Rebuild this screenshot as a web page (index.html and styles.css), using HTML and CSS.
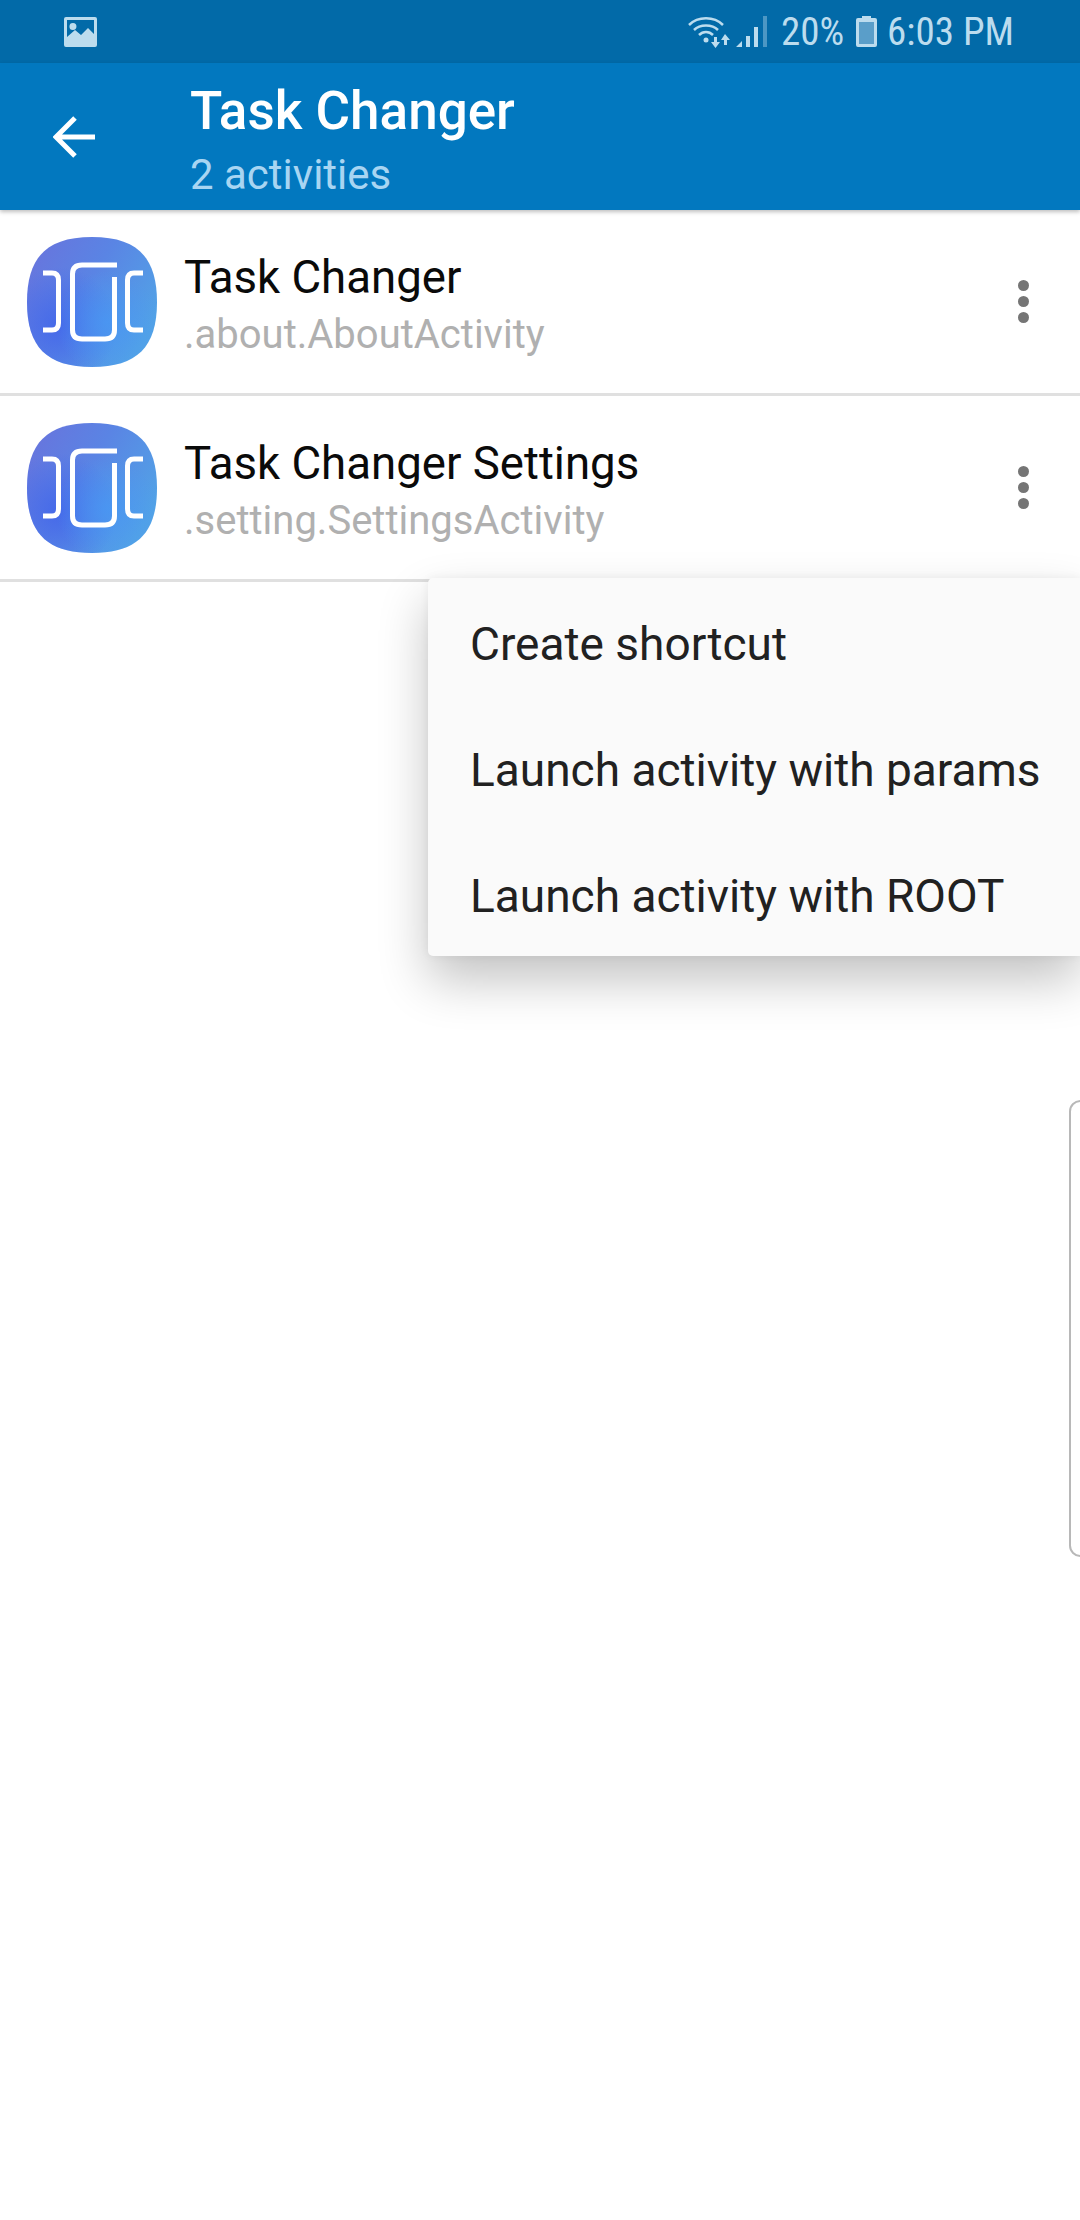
FILE: index.html
```html
<!DOCTYPE html>
<html lang="en">
<head>
    <meta charset="UTF-8">
    <meta name="viewport" content="width=device-width, initial-scale=1.0">
    <title>Task Changer</title>
    <link rel="stylesheet" href="styles.css">
</head>
<body>
    <svg class="defs" width="0" height="0">
        <defs>
            <linearGradient id="iconBase" x1="0" y1="0" x2="1" y2="0.6">
                <stop offset="0" stop-color="#6a72dc"/>
                <stop offset="0.5" stop-color="#5a84e4"/>
                <stop offset="1" stop-color="#52a2e6"/>
            </linearGradient>
            <radialGradient id="iconGlowLeft" cx="0.25" cy="0.68" r="0.45">
                <stop offset="0" stop-color="#4366ea" stop-opacity="0.9"/>
                <stop offset="1" stop-color="#4366ea" stop-opacity="0"/>
            </radialGradient>
            <radialGradient id="iconGlowRight" cx="0.62" cy="0.66" r="0.4">
                <stop offset="0" stop-color="#4898f4" stop-opacity="0.8"/>
                <stop offset="1" stop-color="#4898f4" stop-opacity="0"/>
            </radialGradient>
            <symbol id="appIcon" viewBox="0 0 130 130">
                <path d="M65 0C110 0 130 20 130 65S110 130 65 130S0 110 0 65S20 0 65 0Z" fill="url(#iconBase)"/>
                <path d="M65 0C110 0 130 20 130 65S110 130 65 130S0 110 0 65S20 0 65 0Z" fill="url(#iconGlowLeft)"/>
                <path d="M65 0C110 0 130 20 130 65S110 130 65 130S0 110 0 65S20 0 65 0Z" fill="url(#iconGlowRight)"/>
                <g fill="none" stroke="#fff" stroke-width="5">
                    <path d="M87.500 40V93Q87.500 102 78 102H55Q45.500 102 45.500 93V37Q45.500 28 55 28H90"/>
                    <path d="M16 36H25Q31.500 36 31.500 43V86Q31.500 93 25 93H16"/>
                    <path d="M116 36H107Q100.500 36 100.500 43V86Q100.500 93 107 93H116"/>
                </g>
            </symbol>
        </defs>
    </svg>

    <header class="status-bar">
        <svg class="notif-icon" viewBox="0 0 33 30">
            <path fill="#bcdcee" fill-rule="evenodd" d="M2 0H31Q33 0 33 2V28Q33 30 31 30H2Q0 30 0 28V2Q0 0 2 0ZM3 3V20L11 13L17 18L24 11L30 17V3ZM9 6A3.500 3.500 0 1 1 8.900 13A3.500 3.500 0 0 1 9 6Z"/>
        </svg>
        <div class="status-right">
            <svg class="wifi-icon" viewBox="0 0 42 32">
                <g fill="none" stroke="#bcdcee" stroke-width="2.500">
                    <path d="M1 9C10 0 26 0 35 9"/>
                    <path d="M6 14C12 8 24 8 30 14"/>
                    <path d="M11 19C15 15 21 15 25 19"/>
                </g>
                <circle cx="18" cy="24" r="2.500" fill="#bcdcee"/>
                <path fill="#bcdcee" d="M26 21H29V26H32L27.500 32L23 26H26ZM37 18L42 24H39V29H36V24H33Z"/>
            </svg>
            <svg class="signal-icon" viewBox="0 0 31 31">
                <path fill="#bcdcee" d="M0 31L6 25V31ZM10 20H14V31H10ZM18 11H22V31H18Z"/>
                <path fill="#bcdcee" opacity="0.4" d="M27 0H31V31H27Z"/>
            </svg>
            <span class="status-text">20%</span>
            <svg class="battery-icon" viewBox="0 0 21 31">
                <path fill="#bcdcee" fill-rule="evenodd" d="M6 0H15V2H19Q21 2 21 4V29Q21 31 19 31H2Q0 31 0 29V4Q0 2 2 2H6Z"/>
                <rect x="3" y="6" width="15" height="22" fill="#5a9ec9"/>
            </svg>
            <span class="status-text">6:03 PM</span>
        </div>
    </header>

    <div class="toolbar">
        <svg class="back-icon" viewBox="0 0 42 42">
            <path d="M42 21H3M22 2L3 21L22 40" fill="none" stroke="#fff" stroke-width="5"/>
        </svg>
        <div class="toolbar-text">
            <div class="toolbar-title">Task Changer</div>
            <div class="toolbar-sub">2 activities</div>
        </div>
    </div>

    <div class="list">
        <div class="row">
            <svg class="app-icon"><use href="#appIcon"/></svg>
            <div class="row-text">
                <div class="row-title">Task Changer</div>
                <div class="row-sub">.about.AboutActivity</div>
            </div>
            <div class="more"><i></i><i></i><i></i></div>
        </div>
        <div class="row">
            <svg class="app-icon"><use href="#appIcon"/></svg>
            <div class="row-text">
                <div class="row-title">Task Changer Settings</div>
                <div class="row-sub">.setting.SettingsActivity</div>
            </div>
            <div class="more"><i></i><i></i><i></i></div>
        </div>
    </div>

    <div class="menu">
        <div class="menu-item">Create shortcut</div>
        <div class="menu-item">Launch activity with params</div>
        <div class="menu-item">Launch activity with ROOT</div>
    </div>

    <div class="edge-handle"></div>
</body>
</html>
```

FILE: styles.css
```css
body {
    margin: 0;
    width: 1080px;
    height: 2220px;
    overflow: hidden;
    background-color: #fff;
    font-family: Roboto, sans-serif;
    position: relative;
}
.defs {
    position: absolute;
}
.status-bar {
    height: 63px;
    background-color: #026aa8;
    display: flex;
    align-items: center;
    justify-content: space-between;
    padding: 0 66px 0 64px;
}
.notif-icon {
    width: 33px;
    height: 30px;
}
.status-right {
    display: flex;
    align-items: center;
}
.wifi-icon {
    width: 42px;
    height: 32px;
    margin-right: 6px;
}
.signal-icon {
    width: 31px;
    height: 31px;
    margin-right: 14px;
}
.battery-icon {
    width: 21px;
    height: 31px;
    margin: 0 10px 0 12px;
}
.status-text {
    font-size: 39px;
    line-height: 44px;
    color: #bcdcee;
    font-stretch: 75%;
}
.toolbar {
    height: 147px;
    background-color: #0278bf;
    display: flex;
    align-items: center;
    box-shadow: 0 2px 4px rgba(0, 0, 0, 0.25);
    position: relative;
}
.back-icon {
    width: 42px;
    height: 42px;
    margin: 0 95px 0 53px;
}
.toolbar-text {
    padding-top: 14px;
}
.toolbar-title {
    font-size: 53px;
    font-weight: 500;
    line-height: 62px;
    color: #fff;
}
.toolbar-sub {
    font-size: 42px;
    line-height: 66px;
    color: #a8d5f2;
}
.row {
    height: 183px;
    border-bottom: 3px solid #e0e0e0;
    display: flex;
    align-items: center;
    padding-left: 27px;
}
.app-icon {
    width: 130px;
    height: 130px;
    margin-right: 27px;
}
.row-text {
    flex: 1;
    padding-top: 9px;
}
.row-title {
    font-size: 45.600px;
    line-height: 57px;
    color: #0a0a0a;
}
.row-sub {
    font-size: 40px;
    line-height: 57px;
    color: #b0b0b0;
}
.more {
    width: 11px;
    margin-right: 51px;
    display: flex;
    flex-direction: column;
    gap: 5px;
}
.more i {
    width: 11px;
    height: 11px;
    border-radius: 50%;
    background-color: #757575;
}
.menu {
    position: absolute;
    left: 428px;
    right: 0;
    top: 578px;
    background-color: #fafafa;
    border-radius: 5px 0 0 5px;
    box-shadow: 0 24px 50px rgba(0, 0, 0, 0.24), 0 0 10px rgba(0, 0, 0, 0.06);
}
.menu-item {
    height: 120px;
    line-height: 120px;
    padding: 6px 0 0 42px;
    font-size: 46px;
    color: #212121;
    white-space: nowrap;
}
.edge-handle {
    position: absolute;
    left: 1069px;
    right: -12px;
    top: 1100px;
    height: 453px;
    border: 2px solid #b8b8b8;
    border-radius: 14px;
    background-color: #fff;
}
```
